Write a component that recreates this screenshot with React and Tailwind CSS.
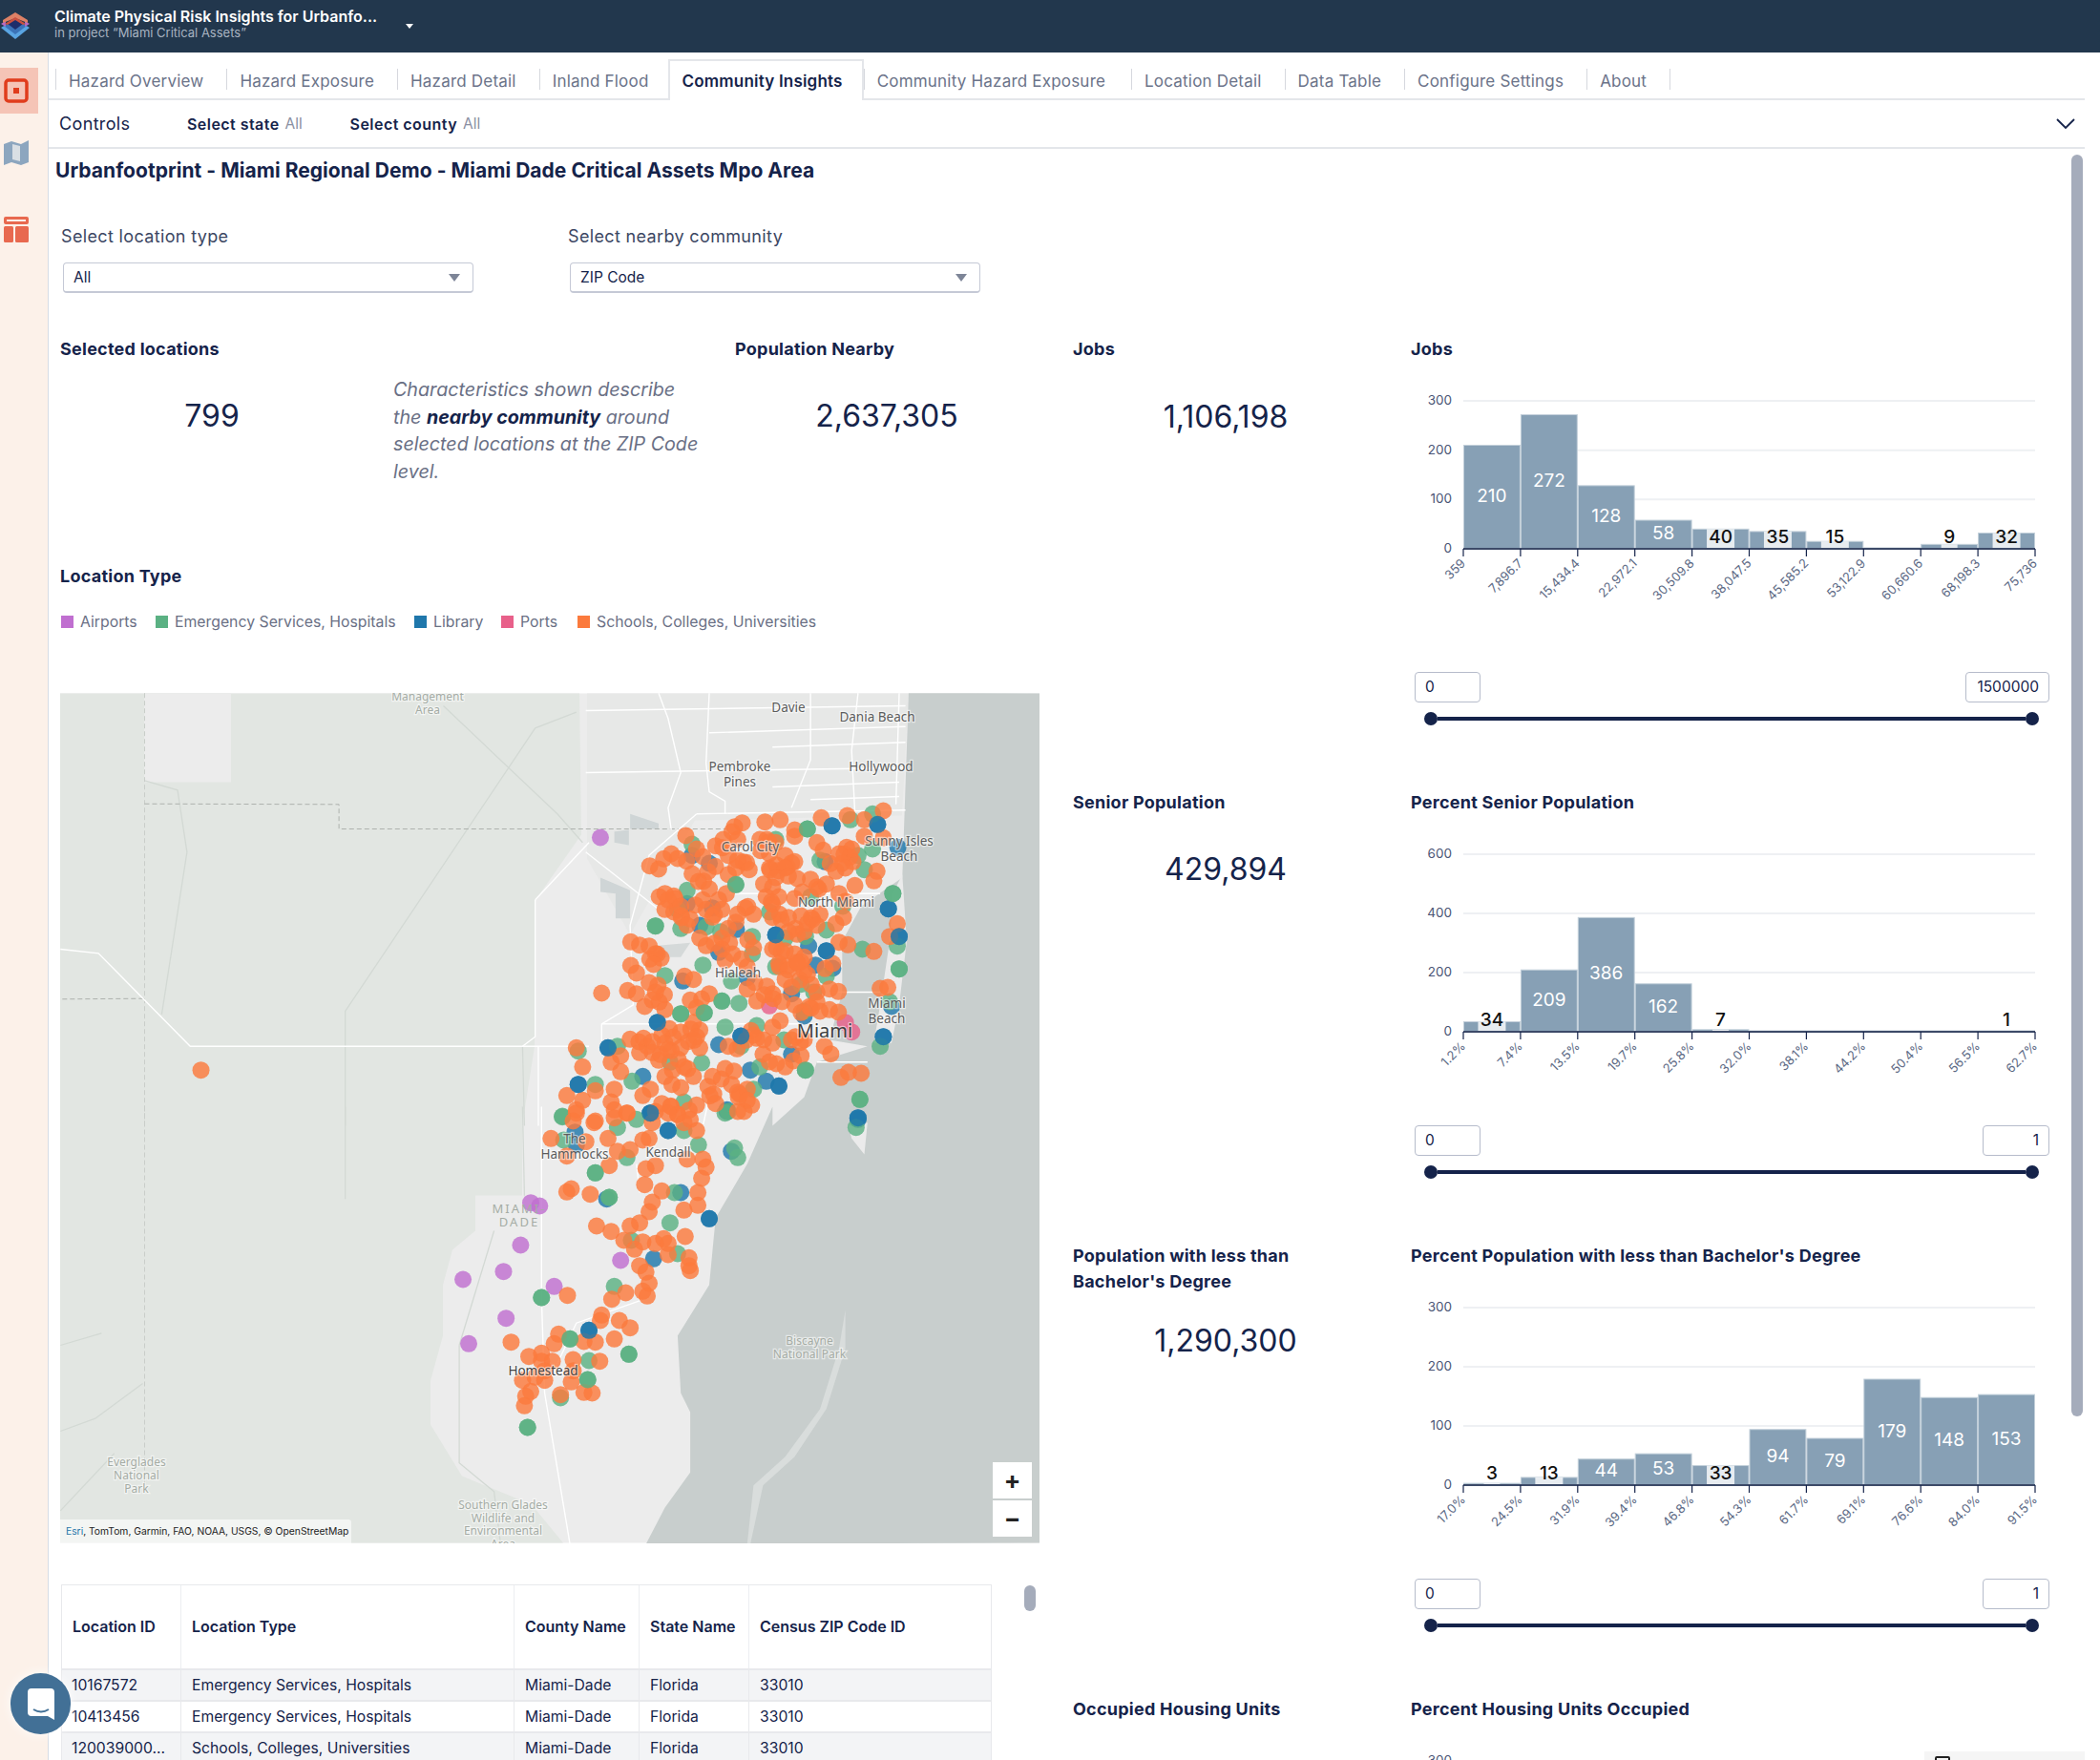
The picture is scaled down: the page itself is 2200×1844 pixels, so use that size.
import React from "react";

const NAVY = "#15234a";
const z7 = ([a, b]) => [60 + a / 1.508, 720 + b / 3];
const z8 = ([a, b]) => [60 + a / 1.508, 1160 + b / 3];
const pts = (f, l) => l.map((p) => f(p).map((n) => n.toFixed(1)).join(",")).join(" ");

const O7 = [[1248,405],[1305,390],[1207,412],[1142,418],[1118,425],[1082,428],[1070,440],[1275,418],[1165,450],[993,468],[1010,510],[970,525],[1040,500],[1075,480],[1110,480],[1135,490],[1165,470],[1200,490],[1255,510],[1235,525],[1275,470],[1305,475],[1060,530],[1075,545],[1125,525],[1150,530],[1165,550],[1240,555],[1230,580],[980,540],[950,573],[1003,588],[1040,565],[1060,590],[1093,575],[1125,570],[1150,570],[1190,605],[1215,620],[1260,625],[1245,570],[1290,610],[1295,580],[1135,600],[1155,595],[1130,630],[1120,660],[1140,660],[1165,665],[1030,635],[960,650],[965,670],[1235,650],[1020,670],[1045,670],[985,690],[960,700],[1000,730],[1025,700],[1050,700],[1075,715],[1100,715],[1130,725],[1155,725],[1175,720],[1205,715],[1230,745],[1200,750],[1155,770],[1180,770],[1015,790],[1050,790],[1060,760],[995,750],[1327,745],[1315,785],[1235,803],[920,812],[935,815],[948,840],[1050,825],[1100,820],[1130,825],[1150,830],[1165,840],[1180,850],[1290,832],[1055,860],[1090,880],[1140,870],[1155,890],[1170,870],[1225,870],[942,873],[915,900],[935,930],[1005,920],[1150,920],[1185,905],[1090,950],[1130,965],[945,960],[915,965],[1000,985],[1030,965],[860,963],[1105,988],[1200,960],[1220,950],[1300,948],[1312,945],[1145,990],[1165,1000],[1200,990],[928,1005],[960,1015],[1220,1015],[1205,1020],[1005,1055],[985,1085],[955,1095],[1010,1100],[905,1108],[940,1115],[960,1120],[1100,1095],[1130,1070],[1105,1105],[1160,1110],[1180,1110],[820,1135],[890,1160],[940,1150],[965,1140],[985,1135],[1015,1135],[1060,1130],[1130,1120],[1212,1130],[1175,1160],[875,1180],[920,1150],[990,1195],[1055,1200],[1150,1195],[1115,1155],[890,1210],[1250,1212],[1270,1215],[830,1195],[960,1225],[1005,1225],[1035,1225],[985,1260],[1065,1250],[1090,1265],[850,1270],[805,1285],[880,1265],[925,1285],[1037,1280],[830,1300],[955,1310],[875,1305],[1090,1300],[820,1330],[970,1320],[1010,1315],[1085,1335],[900,1340],[1040,1310],[980,1345],[850,1365],[880,1355],[1000,1360],[227,1205]];
const G7 = [[1185,447],[1253,418],[1288,400],[1003,495],[1135,480],[1265,530],[1205,545],[1288,510],[1275,575],[1072,622],[995,640],[1320,650],[1190,660],[1241,690],[980,700],[945,752],[985,760],[1025,755],[1048,770],[1125,708],[1098,785],[1150,790],[1182,785],[1215,765],[1272,825],[1327,815],[1020,875],[960,908],[1098,840],[1135,880],[1065,925],[1175,935],[1215,910],[1330,887],[1050,988],[1077,995],[985,1028],[1022,1025],[1180,1020],[1195,960],[1315,990],[823,1145],[885,1130],[1055,1070],[1105,1065],[1148,1110],[1080,1130],[1300,1130],[968,1180],[1018,1182],[1110,1195],[1182,1205],[908,1240],[850,1250],[1100,1265],[1268,1297],[990,1305],[1060,1335],[798,1352],[915,1360]];
const B7 = [[1224,437],[1296,433],[1003,530],[1030,555],[1213,550],[1328,505],[995,682],[1035,695],[1313,698],[1073,763],[1135,780],[1330,785],[1187,815],[1215,830],[1015,750],[1045,835],[1198,875],[1225,885],[988,925],[1090,915],[1160,965],[1318,1005],[948,1055],[1180,1035],[870,1135],[1080,1098],[1305,1100],[1045,1125],[1160,1155],[1095,1205],[925,1225],[1140,1255],[1120,1240],[823,1250],[1058,1330],[937,1340],[1265,1355]];
const PK7 = [[1125,1003],[1245,1055],[1255,1085]];
const O8 = [[820,20],[880,10],[900,20],[945,15],[1075,15],[848,50],[780,100],[815,45],[835,110],[940,50],[1010,75],[990,50],[965,20],[870,100],[935,100],[925,105],[885,140],[905,135],[805,155],[1020,165],[995,165],[872,185],[1025,190],[945,185],[930,195],[1018,225],[928,245],[812,258],[805,268],[842,275],[955,265],[1012,270],[940,300],[1012,310],[990,325],[935,330],[920,365],[852,375],[905,375],[875,392],[992,408],[958,415],[895,420],[925,425],[945,430],[965,430],[912,448],[998,475],[1000,515],[998,500],[920,500],[965,465],[930,520],[935,555],[925,580],[898,585],[932,595],[876,605],[806,593],[860,655],[888,672],[905,695],[858,672],[792,715],[717,740],[880,730],[850,740],[832,738],[785,745],[765,775],[745,785],[782,800],[815,795],[857,800],[765,800],[815,830],[735,860],[755,850],[770,860],[812,865],[748,895],[795,905],[832,898],[845,900],[740,910],[738,940],[770,830]];
const G8 = [[798,30],[885,65],[990,75],[800,105],[1013,120],[900,160],[850,208],[872,285],[975,270],[968,365],[907,420],[980,462],[880,565],[765,600],[810,730],[840,798],[838,858],[795,915],[903,778],[743,1008],[1075,160],[1070,130],[1262,65],[1055,20]];
const B8 = [[937,20],[965,75],[820,120],[818,80],[868,290],[985,270],[1030,352],[942,478],[840,703],[1065,140],[1265,40],[1058,15]];
const P8 = [[858,-846],[748,302],[762,312],[732,435],[890,483],[705,518],[641,543],[785,565],[709,665],[650,745]];

const JIT = [[10, 12], [-12, 8], [12, -10], [-9, -12], [14, 4], [-14, -5]];
const denser = O7.filter(([a, b]) => b > 470 && b < 1345 && a > 900 && a < 1260).map(([a, b], i) => [a + JIT[i % 6][0], b + JIT[i % 6][1] * 2]);

const dots = [
  ...B7.map((p) => [z7(p), "#1f77ab"]),
  ...B8.map((p) => [z8(p), "#1f77ab"]),
  ...G7.map((p) => [z7(p), "#5bb183"]),
  ...G8.map((p) => [z8(p), "#5bb183"]),
  ...P8.map((p) => [z8(p), "#c06fd0"]),
  ...PK7.map((p) => [z7(p), "#e8608a"]),
  ...denser.map((p) => [z7(p), "#fb7a3d"]),
  ...O7.map((p) => [z7(p), "#fb7a3d"]),
  ...O8.map((p) => [z8(p), "#fb7a3d"]),
  ...[[1296,433],[1224,437],[1330,785],[1313,698],[1215,830],[948,1055],[1080,1098],[1305,1100],[1140,1255],[870,1135],[1135,780],[823,1250],[937,1340],[1265,1355]].map((p) => [z7(p), "#1f77ab"]),
  ...[[1185,447],[945,752],[1072,622],[1050,988],[985,1028],[1022,1025],[1182,1205],[1330,887],[1320,650],[1268,1297]].map((p) => [z7(p), "#5bb183"]),
  ...[[1030,352],[965,75],[840,703]].map((p) => [z8(p), "#1f77ab"]),
  ...[[850,208],[872,285],[903,778],[838,858],[743,1008],[810,730],[765,600]].map((p) => [z8(p), "#5bb183"]),
];

const thinLines7 = [[[610,60],[790,400],[830,490]],[[820,80],[755,130],[455,1020],[455,1380]],[[138,295],[190,325],[205,520],[165,1030]],[[735,1130],[738,1380]]];
const thinLines8 = [[[455,0],[455,290]],[[735,0],[738,280]],[[635,750],[635,1120],[690,1210],[700,1370]],[[690,390],[635,750]],[[5,1020],[60,980],[135,870]],[[5,750],[70,712]],[[5,1270],[90,1090]]];
const roads7 = [[[950,20],[965,100],[985,270],[965,380],[970,450]],[[1030,20],[1025,240],[1030,330],[1055,360],[1055,400]],[[1190,20],[1190,230],[1160,380]],[[1265,20],[1255,200],[1260,390]],[[1330,20],[1325,370]],[[835,75],[1340,60]],[[1030,145],[1340,125]],[[1130,190],[1340,175]],[[835,270],[1340,255]],[[1130,315],[1330,300]],[[1190,355],[1330,345]],[[1010,400],[1340,388]],[[1010,400],[935,530],[905,750],[910,1000],[860,1060],[860,1130]],[[835,520],[950,700]],[[755,670],[840,490]],[[755,670],[755,1100],[735,1130]],[[5,825],[65,838],[210,1130],[840,1130]],[[1060,650],[1300,650]],[[1220,960],[1300,960]],[[860,1060],[1170,1060]],[[1200,1180],[1280,1180]],[[1020,1380],[1040,1200]],[[760,1380],[760,1130]]];
const roads8 = [[[765,0],[765,600],[770,900],[810,1375]],[[920,610],[820,680],[780,850]],[[915,180],[920,270]]];

const mapLabels = [
  ["Management", 448, 734, 12, "#a5aca5"], ["Area", 448, 748, 12, "#a5aca5"],
  ["Davie", 826, 746, 13.5, "#5c5c5c"], ["Dania Beach", 919, 756, 13.5, "#5c5c5c"],
  ["Pembroke", 775, 808, 13.5, "#5c5c5c"], ["Pines", 775, 824, 13.5, "#5c5c5c"], ["Hollywood", 923, 808, 13.5, "#5c5c5c"],
  ["Carol City", 786, 892, 13.5, "#5c5c5c"], ["Sunny Isles", 942, 886, 13.5, "#5c5c5c"], ["Beach", 942, 902, 13.5, "#5c5c5c"],
  ["North Miami", 876, 950, 13.5, "#5c5c5c"], ["Hialeah", 773, 1024, 13.5, "#5c5c5c"], ["Miami", 864, 1087, 20, "#3f3f3f"],
  ["Miami", 929, 1056, 13.5, "#5c5c5c"], ["Beach", 929, 1072, 13.5, "#5c5c5c"], ["The", 602, 1198, 13.5, "#5c5c5c"], ["Hammocks", 602, 1214, 13.5, "#5c5c5c"],
  ["Kendall", 700, 1212, 13.5, "#5c5c5c"], ["Homestead", 569, 1441, 13.5, "#444"], ["Biscayne", 848, 1409, 12, "#a5aca5"], ["National Park", 848, 1423, 12, "#a5aca5"],
  ["Everglades", 143, 1536, 12, "#a5aca5"], ["National", 143, 1550, 12, "#a5aca5"], ["Park", 143, 1564, 12, "#a5aca5"],
  ["Southern Glades", 527, 1581, 12, "#a5aca5"], ["Wildlife and", 527, 1595, 12, "#a5aca5"], ["Environmental", 527, 1608, 12, "#a5aca5"], ["Area", 527, 1622, 12, "#a5aca5"],
];

function MapArt() {
  return (
    <svg viewBox="63 727 1026 890" className="block w-full h-full" fontFamily="'Noto Sans', sans-serif">
      <rect x="63" y="727" width="1026" height="890" fill="#ececec" />
      <polygon points="63,727 607,727 609,875 560,945 560,1097 547,1180 547,1253 498,1253 498,1290 474,1310 464,1347 464,1400 451,1447 451,1493 484,1547 557,1577 590,1617 63,1617" fill="#e2e6e2" />
      <rect x="151" y="727" width="91" height="93" fill="#ececec" />
      <polygon points="615,727 952,727 945,855 728,860 660,980 615,900" fill="#e7e8e7" />
      <polygon points={pts(z7, [[905,400],[950,430],[950,447],[905,447]])} fill="#cfd5d6" />
      <polygon points={pts(z7, [[880,455],[903,450],[903,498],[880,490]])} fill="#cfd5d6" />
      <polygon points={pts(z7, [[858,600],[905,640],[905,728],[882,728],[882,650],[858,645]])} fill="#cfd5d6" />
      <polygon points={pts(z7, [[940,815],[1000,805],[985,850],[945,850]])} fill="#d5d9d9" />
      <polygon
        points={`${pts(z7, [[1345,20],[1335,600],[1270,690],[1240,800],[1240,960],[1220,1110],[1280,1130],[1200,1180],[1180,1290],[1130,1380]])} ${pts(z8, [[1130,0],[1090,180],[1040,350],[1030,560],[980,720],[985,900],[1000,960],[1000,1150],[960,1260],[930,1375]])} 1089,1617 1089,727`}
        fill="#c8cecd"
      />
      <polygon points={pts(z7, [[1335,590],[1342,800],[1330,1000],[1318,1120],[1290,1120],[1300,1000],[1315,800],[1320,650]])} fill="#ebebeb" />
      <polygon points={pts(z8, [[1250,60],[1280,50],[1275,150],[1255,100]])} fill="#ebebeb" />
      <polygon points={pts(z8, [[1245,640],[1235,760],[1205,950],[1150,1100],[1100,1190],[1090,1375],[1095,1375],[1115,1190],[1165,1100],[1215,950],[1245,760]])} fill="#d9dddc" />
      {thinLines7.map((l, i) => <polyline key={i} points={pts(z7, l)} fill="none" stroke="#d3d9d4" strokeWidth="1.3" />)}
      {thinLines8.map((l, i) => <polyline key={i} points={pts(z8, l)} fill="none" stroke="#d3d9d4" strokeWidth="1.3" />)}
      <polyline points={pts(z7, [[138,20],[138,1380]])} fill="none" stroke="#c9cdc9" strokeWidth="1" strokeDasharray="5 3" />
      <polyline points={pts(z8, [[138,0],[138,1200]])} fill="none" stroke="#c9cdc9" strokeWidth="1" strokeDasharray="5 3" />
      <polyline points={pts(z7, [[138,368],[445,370],[445,447],[1060,447]])} fill="none" stroke="#aeb2ae" strokeWidth="1" strokeDasharray="5 3" />
      <polyline points={pts(z7, [[8,982],[138,980]])} fill="none" stroke="#aeb2ae" strokeWidth="1" strokeDasharray="5 3" />
      {roads7.map((l, i) => <polyline key={i} points={pts(z7, l)} fill="none" stroke="#ffffff" strokeWidth="1.4" />)}
      {roads8.map((l, i) => <polyline key={i} points={pts(z8, l)} fill="none" stroke="#ffffff" strokeWidth="1.4" />)}
      {dots.map(([[x, y], c], i) => <circle key={i} cx={x} cy={y} r="9" fill={c} fillOpacity="0.82" />)}
      {mapLabels.map(([t, x, y, s, c], i) => (
        <text key={i} x={x} y={y} fontSize={s} fill={c} textAnchor="middle" stroke="#ffffff" strokeOpacity="0.55" strokeWidth="2.5" paintOrder="stroke">{t}</text>
      ))}
      <text x="544" y="1271" fontSize="13" fill="#a5aca5" textAnchor="middle" letterSpacing="2">MIAMI-</text>
      <text x="544" y="1285" fontSize="13" fill="#a5aca5" textAnchor="middle" letterSpacing="2">DADE</text>
    </svg>
  );
}

function Histogram({ values, ticks, yTicks, unit, h }) {
  const x0 = 55;
  const step = 59.9;
  const base = 25 + h;
  return (
    <svg width="672" height="300" className="block">
      {yTicks.map((v) => (
        <g key={v}>
          <line x1={x0} x2={x0 + 599} y1={base - v * unit} y2={base - v * unit} stroke={v === 0 ? "none" : "#eef0f3"} strokeWidth="2" />
          <text x="43" y={base - v * unit + 4} fontSize="13.5" fill="#4a5575" textAnchor="end">{v}</text>
        </g>
      ))}
      {values.map((v, i) => {
        const bh = Math.max(v * unit, 1);
        return <rect key={i} x={x0 + i * step + 0.5} y={base - bh} width={step - 1} height={bh} fill="#87a0b5" stroke="#c3d0da" strokeWidth="1" />;
      })}
      {values.map((v, i) => {
        if (v === 0) return null;
        const bh = v * unit;
        const cx = x0 + i * step + step / 2;
        const dark = bh < 24;
        if (!dark) return <text key={i} x={cx} y={base - bh / 2 + 5} fontSize="19" fill="#ffffff" textAnchor="middle">{v}</text>;
        if (v < 2 && !ticks[0].includes("%")) return null;
        const w = String(v).length === 1 ? 17 : 29;
        return (
          <g key={i}>
            <rect x={cx - w / 2} y={base - bh} width={w} height={bh} fill="#ffffff" fillOpacity="0.8" />
            <text x={cx} y={base - 6} fontSize="19" fontWeight="500" fill="#111111" textAnchor="middle">{v}</text>
          </g>
        );
      })}
      <line x1={x0} x2={x0 + 599} y1={base} y2={base} stroke="#3c4a68" strokeWidth="2" />
      {ticks.map((t, i) => {
        const tx = x0 + i * step;
        return (
          <g key={t}>
            <line x1={tx} x2={tx} y1={base} y2={base + 8} stroke={NAVY} strokeWidth="1.2" />
            <text transform={`translate(${tx + 3} ${base + 16}) rotate(-45)`} fontSize="13" fill="#5d6a85" textAnchor="end">{t}</text>
          </g>
        );
      })}
    </svg>
  );
}

function Slider({ max, wide }) {
  return (
    <div className="pl-[4px]">
      <div className="flex justify-between w-[665px]">
        <div className="w-[69px] h-[32px] border border-[#b6bccb] rounded-[4px] pl-[10px] text-[15.5px] leading-[30px] text-[#15234a]">0</div>
        <div className={`${wide ? "w-[88px]" : "w-[70px]"} h-[32px] border border-[#b6bccb] rounded-[4px] pr-[10px] text-right text-[15.5px] leading-[30px] text-[#15234a]`}>{max}</div>
      </div>
      <div className="flex items-center w-[644px] ml-[10px] mt-[10px]">
        <div className="w-[14px] h-[14px] rounded-full bg-[#15234a]" />
        <div className="flex-1 h-[4px] bg-[#15234a]" />
        <div className="w-[14px] h-[14px] rounded-full bg-[#15234a]" />
      </div>
    </div>
  );
}

function Row({ midTitle, midValue, title, chart, max, wide, valueTop }) {
  return (
    <>
      <div className="h-[475px] pt-[6px]">
        <h3 className="text-[18px] leading-[27px] font-bold tracking-[0.25px] text-[#15234a] w-[270px]">{midTitle}</h3>
        {midValue && <div className={`w-[320px] text-center text-[32px] leading-[40px] text-[#15234a] ${valueTop}`}>{midValue}</div>}
      </div>
      <div className="h-[475px] pt-[10px]">
        <h3 className="text-[18px] leading-[20px] font-bold tracking-[0.25px] text-[#15234a]">{title}</h3>
        <div className="mt-[19px] h-[309px] overflow-visible">{chart}</div>
        {max && <Slider max={max} wide={wide} />}
      </div>
    </>
  );
}

const TABS = ["Hazard Overview", "Hazard Exposure", "Hazard Detail", "Inland Flood", "Community Insights", "Community Hazard Exposure", "Location Detail", "Data Table", "Configure Settings", "About"];
const rowsT = [
  ["10167572", "Emergency Services, Hospitals", "bg-[#f3f4f6]", "h-[33px]"],
  ["10413456", "Emergency Services, Hospitals", "bg-white", "h-[33px]"],
  ["120039000...", "Schools, Colleges, Universities", "bg-[#f3f4f6]", "h-[33px]"],
];

export default function App() {
  return (
    <div className="relative w-[2200px] h-[1844px] overflow-hidden bg-white font-['Inter',sans-serif] text-[#15234a]">
      <header className="h-[55px] bg-[#22374d] flex items-center">
        <svg width="32" height="32" viewBox="0 0 32 32" className="ml-[0px]">
          <polygon points="1,17 16,8 31,17 16,29" fill="#5aa5e3" />
          <polygon points="4,15 16,7 28,15 16,24" fill="#3b73b8" />
          <polygon points="1,13 6,10 6,16" fill="#b56ac4" />
          <polygon points="31,13 26,10 26,16" fill="#b56ac4" />
          <polygon points="8,13 16,7 24,13 16,19" fill="#1e2d6b" />
          <polygon points="3,9 16,1 29,9 29,12 16,7 3,12" fill="#dd8166" />
          <polygon points="5,13 16,6 27,13 24,14 16,9 8,14" fill="#c9503f" />
        </svg>
        <div className="ml-[25px] w-[368px] pb-[6px]">
          <div className="text-[16px] leading-[20px] font-semibold text-white">Climate Physical Risk Insights for Urbanfo...</div>
          <div className="text-[13px] leading-[15px] text-[#a8b3c0]">in project “Miami Critical Assets”</div>
        </div>
        <div className="w-0 h-0 border-x-[4px] border-x-transparent border-t-[5px] border-t-white" />
      </header>
      <div className="flex h-[1789px]">
        <aside className="w-[51px] shrink-0 bg-[#fcf1e9] border-r border-[#d6dce5] pt-[16px]">
          <div className="w-[40px] h-[48px] bg-[#f5c4b6] flex items-center pl-[4px]">
            <svg width="26" height="26" viewBox="0 0 26 26">
              <rect x="2" y="2" width="22" height="22" rx="3" fill="none" stroke="#e03c1c" strokeWidth="3.5" />
              <rect x="10" y="10" width="6" height="6" fill="#e03c1c" />
            </svg>
          </div>
          <div className="mt-[27px] w-[40px] pl-[3px]">
            <svg width="28" height="28" viewBox="0 0 28 28" className="block">
              <polygon points="1,5 9,2 19,5 27,1 27,24 19,27 9,24 1,27" fill="#8ca6bf" />
              <polygon points="10,5 18,7 18,23 10,21" fill="#d9dfe4" />
            </svg>
          </div>
          <div className="mt-[53px] w-[40px] pl-[4px]">
            <svg width="26" height="27" viewBox="0 0 26 27" className="block">
              <rect x="0" y="0" width="26" height="8" rx="2" fill="#e8694f" />
              <rect x="3" y="3" width="20" height="2" fill="#fcf1e9" />
              <rect x="0" y="10" width="10" height="17" rx="1.5" fill="#e8694f" />
              <rect x="12" y="10" width="14" height="17" rx="1.5" fill="#e8694f" />
            </svg>
          </div>
        </aside>
        <main className="flex-1 relative min-w-0">
          <nav className="h-[50px] w-[2133px] border-b-2 border-[#e4e6ea] flex items-end pl-[7px]">
            {TABS.map((t) => t === "Community Insights" ? (
              <div key={t} className="h-[43px] -mb-[2px] -ml-[4px] bg-white border-x-2 border-t-2 border-[#e4e6ea] border-b-0 pl-[13px] pr-[20px] pt-[2px] flex items-center text-[17px] tracking-[0.2px] font-semibold text-[#15234a]">{t}</div>
            ) : (
              <div key={t} className={`mb-[9px] h-[22px] border-l border-[#d6d8de] last:border-r pl-[13px] ${t === "Community Hazard Exposure" ? "pr-[27px]" : "pr-[24px]"} pt-[5px] flex items-center text-[17px] tracking-[0.2px] text-[#6b7389]`}>{t}</div>
            ))}
          </nav>
          <div className="h-[51px] w-[2133px] border-b-2 border-[#e4e6ea] flex items-center pl-[11px] relative">
            <span className="w-[134px] text-[18px] tracking-[0.35px] text-[#15234a]">Controls</span>
            <span className="text-[16px] font-semibold tracking-[0.45px]">Select state</span>
            <span className="ml-[6px] w-[68px] text-[15.5px] text-[#8a90a2]">All</span>
            <span className="text-[16px] font-semibold tracking-[0.45px]">Select county</span>
            <span className="ml-[6px] text-[15.5px] text-[#8a90a2]">All</span>
            <svg width="20" height="12" viewBox="0 0 20 12" className="ml-auto mr-[10px]"><polyline points="1,1 10,10 19,1" fill="none" stroke="#15234a" strokeWidth="1.8" /></svg>
          </div>
          <div className="pl-[7px] pt-[10px]">
            <h1 className="text-[21px] leading-[26px] font-bold tracking-[0.04px] text-[#15234a]">Urbanfootprint - Miami Regional Demo - Miami Dade Critical Assets Mpo Area</h1>
            <div className="flex mt-[44px] pl-[6px]">
              <div className="w-[531px]">
                <div className="text-[18px] leading-[24px] tracking-[0.35px] text-[#3c4763]">Select location type</div>
                <div className="ml-[2px] mt-[15px] w-[430px] h-[32px] border border-[#c5c9d6] border-b-2 rounded-[4px] flex items-center justify-between pl-[10px] pr-[13px] text-[15.5px]">
                  All
                  <div className="w-0 h-0 border-x-[6px] border-x-transparent border-t-[8px] border-t-[#7d8597]" />
                </div>
              </div>
              <div>
                <div className="text-[18px] leading-[24px] tracking-[0.35px] text-[#3c4763]">Select nearby community</div>
                <div className="ml-[2px] mt-[15px] w-[430px] h-[32px] border border-[#c5c9d6] border-b-2 rounded-[4px] flex items-center justify-between pl-[10px] pr-[13px] text-[15.5px]">
                  ZIP Code
                  <div className="w-0 h-0 border-x-[6px] border-x-transparent border-t-[8px] border-t-[#7d8597]" />
                </div>
              </div>
            </div>
            <div className="flex mt-[39px] pl-[5px]">
              <div className="w-[1061px] shrink-0">
                <div className="flex pt-[10px]">
                  <div className="w-[349px]">
                    <h3 className="text-[18px] leading-[20px] font-bold tracking-[0.25px]">Selected locations</h3>
                    <div className="w-[318px] mt-[40px] text-center text-[32px] leading-[40px]">799</div>
                  </div>
                  <div className="w-[358px] pt-[38px] pr-[28px] text-[19.7px] leading-[28.7px] italic text-[#6a7085]">
                    Characteristics shown describe the <b className="font-bold text-[#15234a]">nearby community</b> around selected locations at the ZIP Code level.
                  </div>
                  <div className="flex-1">
                    <h3 className="text-[18px] leading-[20px] font-bold tracking-[0.25px]">Population Nearby</h3>
                    <div className="w-[318px] mt-[40px] text-center text-[32px] leading-[40px]">2,637,305</div>
                  </div>
                </div>
                <h3 className="mt-[85px] text-[18px] leading-[20px] font-bold tracking-[0.25px]">Location Type</h3>
                <div className="mt-[28px] flex items-center text-[15.8px] leading-[20px] text-[#6a7085]">
                  {[["Airports", "bg-[#c06fd0]", "w-[99px]"], ["Emergency Services, Hospitals", "bg-[#5bb183]", "w-[271px]"], ["Library", "bg-[#1f77ab]", "w-[91px]"], ["Ports", "bg-[#e8608a]", "w-[80px]"], ["Schools, Colleges, Universities", "bg-[#fb7a3d]", "w-[280px]"]].map(([l, c, w]) => (
                    <div key={l} className={`flex items-center pl-[1px] ${w}`}>
                      <span className={`w-[13px] h-[13px] mr-[7px] ${c}`} />
                      {l}
                    </div>
                  ))}
                </div>
                <div className="relative mt-[64px] w-[1026px] h-[891px]">
                  <MapArt />
                  <div className="absolute right-[8px] bottom-[7px] w-[41px] h-[78px] flex flex-col gap-[2px]">
                    <div className="h-[38px] bg-white flex items-center justify-center text-[26px] font-bold leading-none text-[#222]">+</div>
                    <div className="h-[38px] bg-white flex items-center justify-center text-[26px] font-bold leading-none text-[#222]">−</div>
                  </div>
                  <div className="absolute left-0 bottom-0 w-[305px] h-[25px] bg-white/60 rounded-tr-[3px] flex items-center pl-[6px] text-[10.3px] text-[#222] whitespace-nowrap">
                    <span><span className="text-[#1f77ab]">Esri</span>, TomTom, Garmin, FAO, NOAA, USGS, © OpenStreetMap</span>
                  </div>
                </div>
                <div className="relative mt-[43px] ml-[1px] w-[975px] border border-[#e8e9ec] text-[15.7px]">
                  <div className="flex h-[89px] items-center font-semibold border-b-2 border-[#e8e9ec] text-[16px]">
                    <div className="w-[125px] h-full border-r border-[#eceef1] pl-[11px] flex items-center">Location ID</div>
                    <div className="w-[349px] h-full border-r border-[#eceef1] pl-[11px] flex items-center">Location Type</div>
                    <div className="w-[131px] h-full border-r border-[#eceef1] pl-[11px] flex items-center">County Name</div>
                    <div className="w-[115px] h-full border-r border-[#eceef1] pl-[11px] flex items-center">State Name</div>
                    <div className="flex-1 pl-[11px]">Census ZIP Code ID</div>
                  </div>
                  {rowsT.map(([id, type, bg, h]) => (
                    <div key={id} className={`flex items-center border-b-2 border-[#e8e9ec] ${bg} ${h}`}>
                      <div className="w-[125px] h-full border-r border-[#e8e9ec] pl-[10px] flex items-center">{id}</div>
                      <div className="w-[349px] h-full border-r border-[#e8e9ec] pl-[11px] flex items-center">{type}</div>
                      <div className="w-[131px] h-full border-r border-[#e8e9ec] pl-[11px] flex items-center">Miami-Dade</div>
                      <div className="w-[115px] h-full border-r border-[#e8e9ec] pl-[11px] flex items-center">Florida</div>
                      <div className="flex-1 pl-[11px]">33010</div>
                    </div>
                  ))}
                  <div className="absolute left-[1008px] top-0 w-[12px] h-[27px] rounded-full bg-[#a5acbb]" />
                </div>
              </div>
              <div className="grid grid-cols-[354px_1fr] flex-1">
                <Row midTitle="Jobs" midValue="1,106,198" valueTop="mt-[38px]" title="Jobs" max="1500000" wide chart={<Histogram h={155} unit={0.5167} yTicks={[0, 100, 200, 300]} values={[210, 272, 128, 58, 40, 35, 15, 1, 9, 32]} ticks={["359", "7,896.7", "15,434.4", "22,972.1", "30,509.8", "38,047.5", "45,585.2", "53,122.9", "60,660.6", "68,198.3", "75,736"]} />} />
                <Row midTitle="Senior Population" midValue="429,894" valueTop="mt-[37px]" title="Percent Senior Population" max="1" chart={<Histogram h={186} unit={0.31} yTicks={[0, 200, 400, 600]} values={[34, 209, 386, 162, 7, 0, 0, 0, 0, 1]} ticks={["1.2%", "7.4%", "13.5%", "19.7%", "25.8%", "32.0%", "38.1%", "44.2%", "50.4%", "56.5%", "62.7%"]} />} />
                <Row midTitle="Population with less than Bachelor's Degree" midValue="1,290,300" valueTop="mt-[29px]" title="Percent Population with less than Bachelor's Degree" max="1" chart={<Histogram h={186} unit={0.62} yTicks={[0, 100, 200, 300]} values={[3, 13, 44, 53, 33, 94, 79, 179, 148, 153]} ticks={["17.0%", "24.5%", "31.9%", "39.4%", "46.8%", "54.3%", "61.7%", "69.1%", "76.6%", "84.0%", "91.5%"]} />} />
                <Row midTitle="Occupied Housing Units" title="Percent Housing Units Occupied" chart={<Histogram h={186} unit={0.62} yTicks={[0, 100, 200, 300]} values={[0, 0, 0, 0, 0, 0, 0, 0, 0, 0]} ticks={["0%"]} />} />
              </div>
            </div>
          </div>
          <div className="absolute left-[2119px] top-[107px] w-[12px] h-[1322px] rounded-full bg-[#a5acbb]" />
        </main>
      </div>
      <div className="absolute left-[2016px] top-[1835px] w-[168px] h-[9px] bg-[#f5f5f5] pl-[11px] pt-[5px]">
        <div className="w-[16px] h-[10px] border-2 border-[#222] rounded-[2px]" />
      </div>
      <div className="absolute left-[11px] top-[1753px] w-[63px] h-[64px] rounded-full bg-[#427096] flex items-center justify-center shadow-[0_0_12px_rgba(255,255,255,0.9)]">
        <svg width="28" height="33" viewBox="0 0 28 33">
          <path d="M4 0 H24 A4 4 0 0 1 28 4 V33 L21 29 H4 A4 4 0 0 1 0 25 V4 A4 4 0 0 1 4 0 Z" fill="#ffffff" />
          <path d="M6 22 Q14 27 22 22" fill="none" stroke="#427096" strokeWidth="2" />
        </svg>
      </div>
    </div>
  );
}
